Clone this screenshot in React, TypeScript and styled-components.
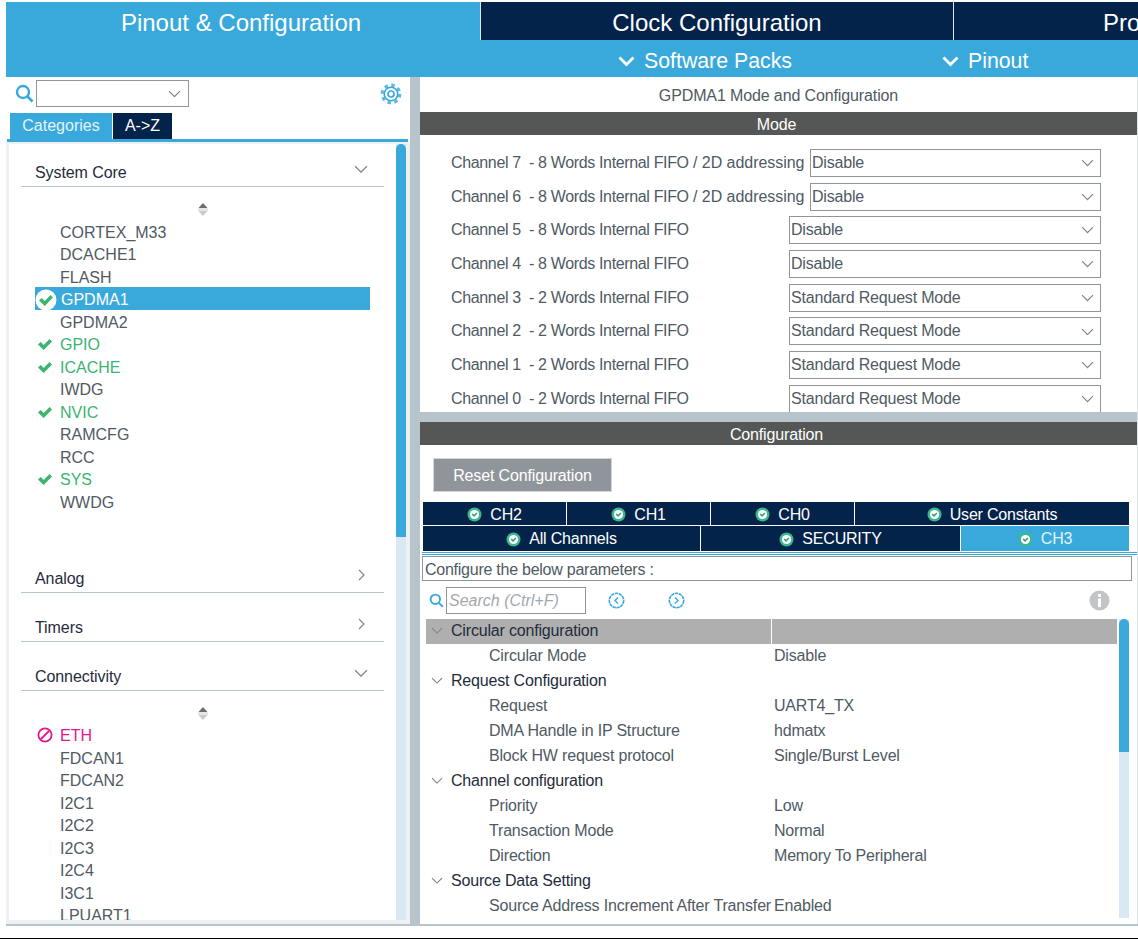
import React from 'react';
import styled, { createGlobalStyle } from 'styled-components';

const BLUE = '#39a9dc';
const NAVY = '#03234b';
const GREY = '#b8c4cc';
const TEXT = '#4f5a63';

const GlobalStyle = createGlobalStyle`
  html, body {
    margin: 0;
    padding: 0;
    background: #fff;
    overflow: hidden;
  }
  body {
    font-family: 'Liberation Sans', Arial, sans-serif;
  }
`;

const Page = styled.div`
  width: 1138px;
  height: 939px;
  box-sizing: border-box;
  padding: 2px 0 0 6px;
  border-bottom: 1px solid #000;
  display: flex;
  flex-direction: column;
  overflow: hidden;
`;

const TopBar = styled.header`
  background: ${BLUE};
  height: 75px;
  flex: none;
  overflow: hidden;
`;

const PerspectiveTabs = styled.div`
  display: flex;
  height: 38px;
  gap: 1px;
  background: #dfe7ec;
`;

const PerspectiveTab = styled.div<{ $active?: boolean; $w: number; $pr?: number }>`
  flex: none;
  box-sizing: border-box;
  width: ${p => p.$w}px;
  padding-right: ${p => p.$pr ?? 0}px;
  background: ${p => (p.$active ? BLUE : NAVY)};
  color: #fff;
  font-size: 24px;
  line-height: 42px;
  text-align: center;
  white-space: nowrap;
  overflow: hidden;
`;

const ClippedTab = styled(PerspectiveTab)`
  text-align: left;
  padding-left: 149px;
`;

const SubBar = styled.div`
  display: flex;
  height: 37px;
  align-items: center;
  padding: 5px 0 0 612px;
  box-sizing: border-box;
  gap: 150px;
`;

const SubItem = styled.div`
  display: flex;
  align-items: center;
  gap: 9px;
  color: #fff;
  font-size: 21.3px;
`;

const Workspace = styled.div`
  display: flex;
  height: 847px;
  flex: none;
  border-bottom: 2px solid ${GREY};
`;

const LeftPanel = styled.aside`
  width: 404px;
  flex: none;
  display: flex;
  flex-direction: column;
`;

const Divider = styled.div`
  width: 10px;
  flex: none;
  background: ${GREY};
`;

const RightPanel = styled.main`
  flex: 1;
  min-width: 0;
  display: flex;
  flex-direction: column;
  border-right: 1px solid #dde3e7;
`;

const SearchRow = styled.div`
  display: flex;
  align-items: center;
  height: 27px;
  flex: none;
  margin: 3px 0 6px;
  padding: 0 8px 0 9px;
`;

const Combo = styled.div`
  width: 153px;
  height: 27px;
  box-sizing: border-box;
  border: 1px solid #8e959b;
  margin-left: 2px;
  display: flex;
  align-items: center;
  justify-content: flex-end;
  padding-right: 7px;
`;

const GearSlot = styled.div`
  margin-left: auto;
  display: flex;
`;

const ViewTabs = styled.div`
  display: flex;
  flex: none;
  gap: 1px;
  height: 26px;
  padding-left: 4px;
`;

const ViewTab = styled.div<{ $active?: boolean; $w: number }>`
  width: ${p => p.$w}px;
  background: ${p => (p.$active ? BLUE : NAVY)};
  color: ${p => (p.$active ? '#e4f3fb' : '#fff')};
  font-size: 16px;
  line-height: 25px;
  text-align: center;
`;

const BlueRule = styled.div`
  height: 3px;
  flex: none;
  background: ${BLUE};
  margin: 0 2px 0 1px;
`;

const TreeFrame = styled.div`
  flex: 1;
  min-height: 0;
  display: flex;
  background: #fff;
  border: solid #eef0f3;
  border-width: 2px 4px 4px 3px;
`;

const TreeBody = styled.div`
  flex: 1;
  min-width: 0;
  overflow: hidden;
  padding-top: 14px;
`;

const Track = styled.div`
  width: 10px;
  flex: none;
  background: #d8e8f5;
  display: flex;
  flex-direction: column;
`;

const Thumb = styled.div<{ $h: number }>`
  height: ${p => p.$h}px;
  background: ${BLUE};
  border-radius: 5px 5px 0 0;
`;

const Category = styled.div<{ $gap?: number }>`
  margin: ${p => p.$gap ?? 0}px 12px 0;
  height: 29px;
  box-sizing: border-box;
  border-bottom: 1px solid ${GREY};
  display: flex;
  justify-content: space-between;
  align-items: center;
  padding: 0 16px 0 14px;
  font-size: 16px;
  line-height: 29px;
  letter-spacing: -0.08px;
  color: #1f2c3c;
`;

const CategoryIcon = styled.span<{ $mr?: number }>`
  display: flex;
  margin: 0 ${p => p.$mr ?? 0}px 6px 0;
`;

const Stepper = styled.div<{ $after: number }>`
  display: flex;
  justify-content: center;
  margin: 15px 0 ${p => p.$after}px;
  height: 16px;
`;

const ItemList = styled.ul<{ $minH?: number }>`
  list-style: none;
  margin: 0;
  padding: 0;
  min-height: ${p => p.$minH ?? 0}px;
`;

const Item = styled.li<{ $kind?: 'selected' | 'ok' | 'error' }>`
  position: relative;
  height: 22.5px;
  line-height: 26.25px;
  font-size: 16px;
  margin: 0 26px;
  padding-left: ${p => (p.$kind === 'selected' ? 26 : 25)}px;
  background: ${p => (p.$kind === 'selected' ? BLUE : 'transparent')};
  color: ${p =>
    p.$kind === 'selected' ? '#fff' : p.$kind === 'ok' ? '#3cb371' : p.$kind === 'error' ? '#e6168c' : TEXT};
`;

const ItemIcon = styled.span<{ $left: number }>`
  position: absolute;
  left: ${p => p.$left}px;
  top: 1px;
  height: 100%;
  display: flex;
  align-items: center;
`;

const PanelTitle = styled.div`
  height: 35px;
  flex: none;
  font-size: 16px;
  line-height: 37px;
  letter-spacing: -0.12px;
  text-align: center;
  color: ${TEXT};
`;

const SectionBar = styled.div`
  height: 23px;
  flex: none;
  box-sizing: border-box;
  padding-right: 4px;
  background: #555756;
  color: #fff;
  font-size: 16px;
  line-height: 25px;
  letter-spacing: -0.15px;
  text-align: center;
`;

const ModeList = styled.div`
  height: 277px;
  flex: none;
  box-sizing: border-box;
  padding: 14px 36px 0 31px;
  display: flex;
  flex-direction: column;
  gap: 5.7px;
`;

const ModeRow = styled.div`
  display: flex;
  height: 28px;
  align-items: center;
  color: ${TEXT};
  font-size: 16px;
  white-space: pre;
  flex: none;
  letter-spacing: -0.35px;
`;

const ModeSuffix = styled.span`
  letter-spacing: -0.05px;
`;

const ModeSelect = styled.div<{ $w: number }>`
  margin-left: auto;
  width: ${p => p.$w}px;
  height: 28px;
  box-sizing: border-box;
  border: 1px solid #8e959b;
  display: flex;
  align-items: center;
  justify-content: space-between;
  padding: 0 6px 0 1px;
  letter-spacing: -0.19px;
`;

const Splitter = styled.div`
  height: 10px;
  flex: none;
  background: ${GREY};
`;

const ConfigBody = styled.div`
  flex: 1;
  min-height: 0;
  display: flex;
  flex-direction: column;
  padding: 13px 0 0 2px;
`;

const ResetButton = styled.button`
  align-self: flex-start;
  margin-left: 11px;
  width: 179px;
  height: 34px;
  padding: 2px 0 0;
  flex: none;
  background: #90959b;
  border: 1px solid #d3d7da;
  color: #fff;
  font: 16px 'Liberation Sans', Arial, sans-serif;
  letter-spacing: -0.15px;
`;

const TabRows = styled.div`
  display: flex;
  flex-direction: column;
  gap: 1px;
  margin-top: 10px;
  flex: none;
`;

const TabRow = styled.div<{ $h: number; $pt: number }>`
  display: flex;
  gap: 1px;
  width: 706px;
  margin-left: 1px;
  flex: none;
  height: ${p => p.$h}px;

  & > div {
    padding-top: ${p => p.$pt}px;
  }
`;

const ConfigTab = styled.div<{ $active?: boolean; $grow: number }>`
  flex: ${p => p.$grow} 0 0;
  background: ${p => (p.$active ? BLUE : NAVY)};
  color: ${p => (p.$active ? '#e4f3fb' : '#fff')};
  font-size: 16px;
  letter-spacing: -0.2px;
  display: flex;
  align-items: center;
  justify-content: center;
  gap: 8px;
  box-sizing: border-box;
`;

const DoubleRule = styled.div`
  height: 3px;
  flex: none;
  box-sizing: border-box;
  margin-top: 1px;
  border-top: 1px solid ${BLUE};
  border-bottom: 1px solid ${BLUE};
`;

const HintBox = styled.div`
  margin: 1px 5px 0 0;
  height: 25px;
  flex: none;
  box-sizing: border-box;
  border: 1px solid #8e959b;
  font-size: 16px;
  line-height: 26px;
  letter-spacing: -0.25px;
  padding-left: 2px;
  color: ${TEXT};
`;

const ToolRow = styled.div`
  display: flex;
  align-items: center;
  height: 28px;
  margin-top: 5px;
  flex: none;
  padding: 0 27px 0 7px;
`;

const SearchBox = styled.div`
  width: 140px;
  height: 27px;
  box-sizing: border-box;
  border: 1px solid #8e959b;
  margin-left: 2px;
  padding-left: 2px;
  font-size: 16px;
  font-style: italic;
  line-height: 25px;
  color: #a3a8ac;
`;

const NavButton = styled.div<{ $ml: number }>`
  display: flex;
  margin-left: ${p => p.$ml}px;
`;

const InfoSlot = styled.div`
  margin-left: auto;
  display: flex;
`;

const TableWrap = styled.div`
  flex: 1;
  min-height: 0;
  display: flex;
  margin: 5px 8px 6px 4px;
`;

const Table = styled.div`
  flex: 1;
  min-width: 0;
  margin-right: 2px;
  overflow: hidden;
`;

const Row = styled.div<{ $selected?: boolean }>`
  display: grid;
  grid-template-columns: 345px 1fr;
  column-gap: 1px;
  height: 25px;
  font-size: 16px;
  letter-spacing: -0.18px;
  background: ${p => (p.$selected ? 'linear-gradient(90deg, #afafaf 345px, #fff 345px, #fff 346px, #afafaf 346px)' : 'transparent')};
`;

const NameCell = styled.div<{ $group?: boolean }>`
  display: flex;
  align-items: center;
  white-space: nowrap;
  padding: 0 0 1px ${p => (p.$group ? 5 : 63)}px;
  gap: 8px;
  color: ${p => (p.$group ? '#1f2c3c' : TEXT)};
`;

const ValueCell = styled.div`
  display: flex;
  align-items: center;
  padding: 0 0 1px 2px;
  color: ${TEXT};
  white-space: nowrap;
`;

const Chevron = ({ size = 12, color = '#7c848a' }: { size?: number; color?: string }) => (
  <svg width={size} height={size * 0.6} viewBox="0 0 12 7" fill="none">
    <path d="M1 1l5 5 5-5" stroke={color} strokeWidth="1.1" />
  </svg>
);

const ChevronRight = () => (
  <svg width="7" height="12" viewBox="0 0 7 12" fill="none">
    <path d="M1 1l5 5-5 5" stroke="#7c848a" strokeWidth="1.1" />
  </svg>
);

const BoldChevron = () => (
  <svg width="17" height="11" viewBox="0 0 17 11" fill="none">
    <path d="M1.5 1.5l7 7 7-7" stroke="#fff" strokeWidth="2.8" />
  </svg>
);

const SearchIcon = ({ size = 19 }: { size?: number }) => (
  <svg width={size} height={size} viewBox="0 0 19 19" fill="none">
    <circle cx="8" cy="8" r="6" stroke={BLUE} strokeWidth="2.4" />
    <path d="M12.5 12.5l5 5" stroke={BLUE} strokeWidth="2.6" />
  </svg>
);

const GearIcon = () => (
  <svg width="22" height="22" viewBox="0 0 22 22" fill="none">
    <circle cx="11" cy="11" r="8.8" stroke="#5cb9e4" strokeWidth="3.2" strokeDasharray="3.46 3.45" />
    <circle cx="11" cy="11" r="6.8" fill="#fff" stroke={BLUE} strokeWidth="1.6" />
    <circle cx="11" cy="11" r="3" stroke={BLUE} strokeWidth="1.7" />
  </svg>
);

const Tick = () => (
  <svg width="16" height="13" viewBox="0 0 16 13">
    <path d="M1 6.5l2.6-2.4 3.1 3L12.6 1 15 3.4 6.7 12z" fill="#3cb371" />
  </svg>
);

const SelectedTick = () => (
  <svg width="22" height="22" viewBox="0 0 22 22">
    <circle cx="11" cy="11" r="10.5" fill="#fff" />
    <path d="M4 11.5l2.6-2.5 3.2 3.1 5.7-6 2.5 2.4-8.2 8.4z" fill="#3cb371" />
  </svg>
);

const Denied = () => (
  <svg width="16" height="16" viewBox="0 0 16 16" fill="none">
    <circle cx="8" cy="8" r="6.6" stroke="#e6168c" strokeWidth="1.8" />
    <path d="M4 12l8-8" stroke="#e6168c" strokeWidth="1.8" />
  </svg>
);

const StatusDot = () => (
  <svg width="15" height="15" viewBox="0 0 15 15">
    <circle cx="7.5" cy="7.5" r="7" fill="#3cb98c" />
    <circle cx="7.5" cy="7.5" r="4.6" fill="#fff" />
    <path d="M4.6 7.6l1.2-1.1 1.3 1.3 2.2-2.4 1.1 1.1-3.3 3.5z" fill="#2f9e7e" />
  </svg>
);

const ScrollStep = () => (
  <svg width="12" height="15" viewBox="0 0 12 15">
    <path d="M6 1l4.5 5h-9z" fill="#6b6f73" />
    <rect x="1" y="6" width="10" height="3" fill="#e3e5e7" />
    <path d="M6 14L1.5 9h9z" fill="#c8cbce" />
  </svg>
);

const NavCircle = ({ left }: { left?: boolean }) => (
  <svg width="17" height="17" viewBox="0 0 17 17" fill="none">
    <circle cx="8.5" cy="8.5" r="7.2" stroke={BLUE} strokeWidth="1.6" strokeDasharray="3.4 0.6" />
    <path d={left ? 'M10 5.5l-3 3 3 3' : 'M7 5.5l3 3-3 3'} stroke={BLUE} strokeWidth="1.4" />
  </svg>
);

const InfoIcon = () => (
  <svg width="21" height="21" viewBox="0 0 21 21">
    <circle cx="10.5" cy="10.5" r="10" fill="#c2c4c6" />
    <rect x="9" y="4" width="3" height="3" fill="#fff" />
    <rect x="9" y="8.5" width="3" height="8.5" fill="#fff" />
  </svg>
);

type TreeItem = { name: string; kind?: 'selected' | 'ok' | 'error' };

const coreItems: TreeItem[] = [
  { name: 'CORTEX_M33' },
  { name: 'DCACHE1' },
  { name: 'FLASH' },
  { name: 'GPDMA1', kind: 'selected' },
  { name: 'GPDMA2' },
  { name: 'GPIO', kind: 'ok' },
  { name: 'ICACHE', kind: 'ok' },
  { name: 'IWDG' },
  { name: 'NVIC', kind: 'ok' },
  { name: 'RAMCFG' },
  { name: 'RCC' },
  { name: 'SYS', kind: 'ok' },
  { name: 'WWDG' },
];

const connectivityItems: TreeItem[] = [
  { name: 'ETH', kind: 'error' },
  { name: 'FDCAN1' },
  { name: 'FDCAN2' },
  { name: 'I2C1' },
  { name: 'I2C2' },
  { name: 'I2C3' },
  { name: 'I2C4' },
  { name: 'I3C1' },
  { name: 'LPUART1' },
];

const modes = [
  { label: 'Channel 7  - 8 Words Internal FIFO', suffix: ' / 2D addressing', value: 'Disable', w: 291 },
  { label: 'Channel 6  - 8 Words Internal FIFO', suffix: ' / 2D addressing', value: 'Disable', w: 291 },
  { label: 'Channel 5  - 8 Words Internal FIFO', value: 'Disable', w: 312 },
  { label: 'Channel 4  - 8 Words Internal FIFO', value: 'Disable', w: 312 },
  { label: 'Channel 3  - 2 Words Internal FIFO', value: 'Standard Request Mode', w: 312 },
  { label: 'Channel 2  - 2 Words Internal FIFO', value: 'Standard Request Mode', w: 312 },
  { label: 'Channel 1  - 2 Words Internal FIFO', value: 'Standard Request Mode', w: 312 },
  { label: 'Channel 0  - 2 Words Internal FIFO', value: 'Standard Request Mode', w: 312 },
];

const params: { name: string; value?: string; group?: boolean; selected?: boolean }[] = [
  { name: 'Circular configuration', group: true, selected: true },
  { name: 'Circular Mode', value: 'Disable' },
  { name: 'Request Configuration', group: true },
  { name: 'Request', value: 'UART4_TX' },
  { name: 'DMA Handle in IP Structure', value: 'hdmatx' },
  { name: 'Block HW request protocol', value: 'Single/Burst Level' },
  { name: 'Channel configuration', group: true },
  { name: 'Priority', value: 'Low' },
  { name: 'Transaction Mode', value: 'Normal' },
  { name: 'Direction', value: 'Memory To Peripheral' },
  { name: 'Source Data Setting', group: true },
  { name: 'Source Address Increment After Transfer', value: 'Enabled' },
];

const renderItem = (item: TreeItem) => (
  <Item key={item.name} $kind={item.kind}>
    {item.kind === 'selected' && <ItemIcon $left={0}><SelectedTick /></ItemIcon>}
    {item.kind === 'ok' && <ItemIcon $left={2}><Tick /></ItemIcon>}
    {item.kind === 'error' && <ItemIcon $left={2}><Denied /></ItemIcon>}
    {item.name}
  </Item>
);

export default function App() {
  return (
    <Page>
      <GlobalStyle />
      <TopBar>
        <PerspectiveTabs>
          <PerspectiveTab $active $w={474} $pr={4}>Pinout &amp; Configuration</PerspectiveTab>
          <PerspectiveTab $w={472}>Clock Configuration</PerspectiveTab>
          <ClippedTab $w={184}>Pro</ClippedTab>
        </PerspectiveTabs>
        <SubBar>
          <SubItem><BoldChevron />Software Packs</SubItem>
          <SubItem><BoldChevron />Pinout</SubItem>
        </SubBar>
      </TopBar>
      <Workspace>
        <LeftPanel>
          <SearchRow>
            <SearchIcon />
            <Combo><Chevron size={13} /></Combo>
            <GearSlot><GearIcon /></GearSlot>
          </SearchRow>
          <ViewTabs>
            <ViewTab $active $w={102}>Categories</ViewTab>
            <ViewTab $w={59}>A-&gt;Z</ViewTab>
          </ViewTabs>
          <BlueRule />
          <TreeFrame>
            <TreeBody>
              <Category>System Core<CategoryIcon><Chevron size={14} /></CategoryIcon></Category>
              <Stepper $after={1.75}><ScrollStep /></Stepper>
              <ItemList $minH={315}>{coreItems.map(renderItem)}</ItemList>
              <Category $gap={29.25}>Analog<CategoryIcon $mr={3}><ChevronRight /></CategoryIcon></Category>
              <Category $gap={20}>Timers<CategoryIcon $mr={3}><ChevronRight /></CategoryIcon></Category>
              <Category $gap={20}>Connectivity<CategoryIcon><Chevron size={14} /></CategoryIcon></Category>
              <Stepper $after={1.125}><ScrollStep /></Stepper>
              <ItemList>{connectivityItems.map(renderItem)}</ItemList>
            </TreeBody>
            <Track><Thumb $h={393} /></Track>
          </TreeFrame>
        </LeftPanel>
        <Divider />
        <RightPanel>
          <PanelTitle>GPDMA1 Mode and Configuration</PanelTitle>
          <SectionBar>Mode</SectionBar>
          <ModeList>
            {modes.map(m => (
              <ModeRow key={m.label}>
                {m.label}
                {m.suffix && <ModeSuffix>{m.suffix}</ModeSuffix>}
                <ModeSelect $w={m.w}>{m.value}<Chevron size={13} /></ModeSelect>
              </ModeRow>
            ))}
          </ModeList>
          <Splitter />
          <SectionBar>Configuration</SectionBar>
          <ConfigBody>
            <ResetButton>Reset Configuration</ResetButton>
            <TabRows>
              <TabRow $h={23} $pt={2}>
                <ConfigTab $grow={143}><StatusDot />CH2</ConfigTab>
                <ConfigTab $grow={143}><StatusDot />CH1</ConfigTab>
                <ConfigTab $grow={143}><StatusDot />CH0</ConfigTab>
                <ConfigTab $grow={274}><StatusDot />User Constants</ConfigTab>
              </TabRow>
              <TabRow $h={25} $pt={1}>
                <ConfigTab $grow={277}><StatusDot />All Channels</ConfigTab>
                <ConfigTab $grow={259}><StatusDot />SECURITY</ConfigTab>
                <ConfigTab $grow={168} $active><StatusDot />CH3</ConfigTab>
              </TabRow>
            </TabRows>
            <DoubleRule />
            <HintBox>Configure the below parameters :</HintBox>
            <ToolRow>
              <SearchIcon size={15} />
              <SearchBox>Search (Ctrl+F)</SearchBox>
              <NavButton $ml={22}><NavCircle left /></NavButton>
              <NavButton $ml={43}><NavCircle /></NavButton>
              <InfoSlot><InfoIcon /></InfoSlot>
            </ToolRow>
            <TableWrap>
              <Table>
                {params.map(p => (
                  <Row key={p.name} $selected={p.selected}>
                    <NameCell $group={p.group}>
                      {p.group && <Chevron size={12} />}
                      {p.name}
                    </NameCell>
                    <ValueCell>{p.value}</ValueCell>
                  </Row>
                ))}
              </Table>
              <Track><Thumb $h={133} /></Track>
            </TableWrap>
          </ConfigBody>
        </RightPanel>
      </Workspace>
    </Page>
  );
}
